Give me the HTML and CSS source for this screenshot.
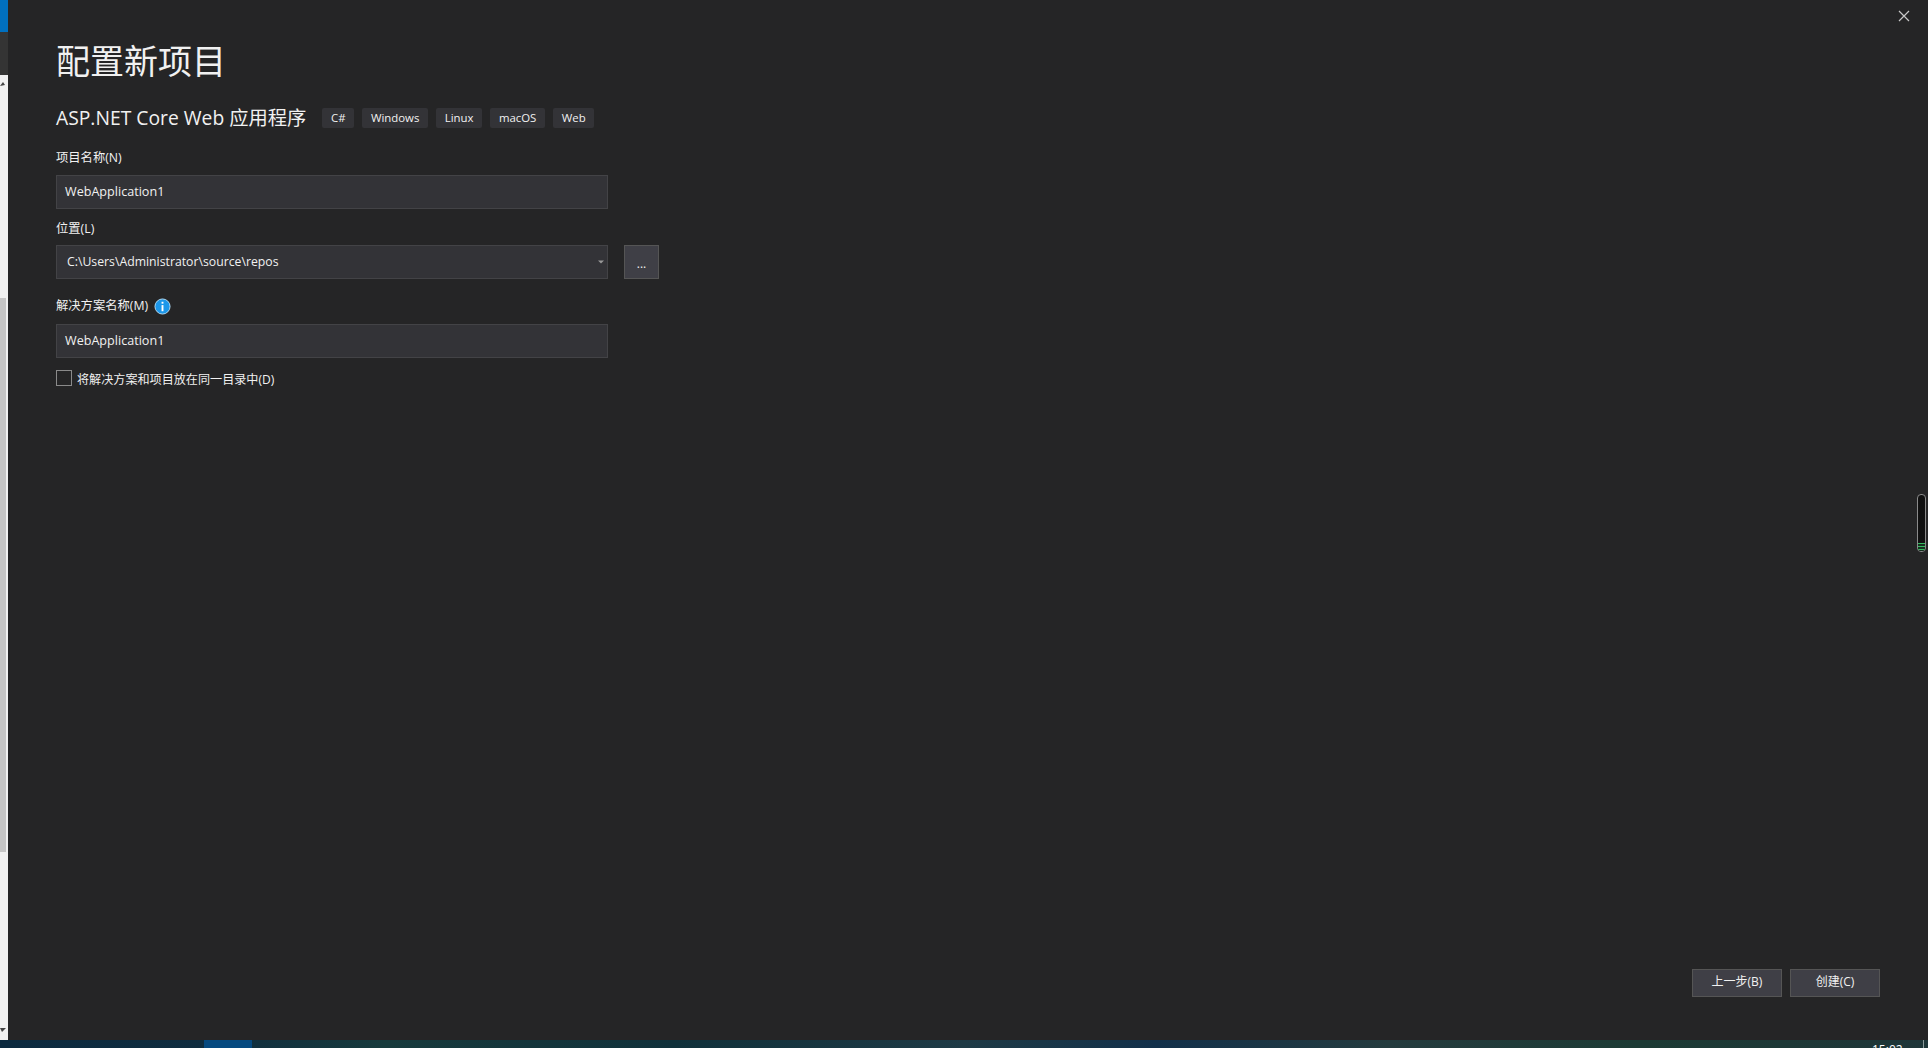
FILE: index.html
```html
<!DOCTYPE html>
<html lang="zh-CN">
<head>
<meta charset="utf-8">
<title>配置新项目</title>
<link rel="stylesheet" href="styles.css">
</head>
<body>
<div class="desktop">
  <aside class="strip">
    <div class="strip-blue"></div>
    <div class="strip-dark"></div>
    <div class="strip-track">
      <svg class="arrow" width="8" height="6" viewBox="0 0 8 6"><path d="M0 5 L3 1 L5 4 Z" fill="#444"/></svg>
      <div class="thumb"></div>
      <svg class="arrow-down" width="8" height="6" viewBox="0 0 8 6"><path d="M0 1 L6 1 L2 5 Z" fill="#444"/></svg>
    </div>
  </aside>
  <main class="dialog">
    <h1 class="title">配置新项目</h1>
    <div class="subtitle-row">
      <h2 class="subtitle">ASP.NET Core Web 应用程序</h2>
      <div class="tags">
        <span class="tag">C#</span>
        <span class="tag">Windows</span>
        <span class="tag">Linux</span>
        <span class="tag">macOS</span>
        <span class="tag">Web</span>
      </div>
    </div>
    <label class="label label-first">项目名称(N)</label>
    <div class="field">WebApplication1</div>
    <label class="label label-second">位置(L)</label>
    <div class="field-row">
      <div class="field field-combo">
        <span class="path">C:\Users\Administrator\source\repos</span>
        <svg class="caret" width="6" height="4" viewBox="0 0 6 4"><path d="M0 0.5 H6 L3 3.5 Z" fill="#999"/></svg>
      </div>
      <div class="browse">...</div>
    </div>
    <div class="label label-third">
      <span>解决方案名称(M)</span>
      <svg class="info" width="17" height="17" viewBox="0 0 18 18">
        <circle cx="9" cy="9" r="8" fill="#1c97ea" stroke="#b5def8" stroke-width="1"/>
        <rect x="8" y="7.5" width="2" height="6.5" fill="#fff"/>
        <rect x="8" y="4" width="2" height="2" fill="#fff"/>
      </svg>
    </div>
    <div class="field field-third">WebApplication1</div>
    <div class="check-row">
      <span class="checkbox"></span>
      <span class="check-text">将解决方案和项目放在同一目录中(D)</span>
    </div>
    <div class="footer">
      <div class="btn">上一步(B)</div>
      <div class="btn">创建(C)</div>
    </div>
    <svg class="close" width="12" height="12" viewBox="0 0 12 12"><path d="M1 1 L11 11 M11 1 L1 11" stroke="#c8c8c8" stroke-width="1.2" fill="none"/></svg>
    <div class="side-widget"><div class="side-green"></div></div>
  </main>
</div>
<footer class="taskbar">
  <div class="task-active"></div>
  <span class="clock">15:02</span>
  <span class="task-line"></span>
</footer>
</body>
</html>
```
FILE: styles.css
```css
* { box-sizing: border-box; }
html, body { margin: 0; height: 100%; }
body {
  display: flex;
  flex-direction: column;
  overflow: hidden;
  background: #252526;
  color: #f1f1f1;
  font-family: "Open Sans", "Noto Sans CJK SC", sans-serif;
  font-size: 13px;
}
.desktop { flex: 1; display: flex; min-height: 0; }
.strip { width: 8px; display: flex; flex-direction: column; flex: none; }
.strip-blue { height: 32px; background: #0070c0; }
.strip-dark { height: 43px; background: #343434; }
.strip-track {
  flex: 1;
  background: #f1f1f1;
  display: flex;
  flex-direction: column;
  padding-top: 6px;
}
.arrow { display: block; }
.thumb { height: 554px; width: 6px; margin-top: 211px; background: #c6c6c6; }
.arrow-down { display: block; margin-top: auto; margin-bottom: 7px; }
.dialog {
  flex: 1;
  position: relative;
  display: flex;
  flex-direction: column;
  padding: 0 48px 43px 48px;
  background: #252526;
}
.title {
  margin: 35px 0 0;
  height: 50px;
  line-height: 50px;
  font-size: 34px;
  font-weight: 400;
  font-family: "Noto Sans CJK SC", sans-serif;
}
.subtitle-row { display: flex; align-items: center; margin-top: 23px; height: 20px; }
.subtitle {
  margin: 0;
  font-size: 19.3px;
  font-weight: 400;
  line-height: 20px;
  white-space: nowrap;
}
.tags { display: flex; gap: 8px; margin-left: 16px; }
.tag {
  height: 20px;
  line-height: 20px;
  padding: 0 8.7px;
  background: #333337;
  border-radius: 2px;
  font-size: 11.4px;
}
.label { display: block; height: 18px; line-height: 18px; font-size: 12.3px; white-space: nowrap; }
.label-first { margin-top: 21px; }
.label-second { margin-top: 11px; }
.label-third { margin-top: 18px; display: flex; align-items: center; gap: 6px; }
.field {
  width: 552px;
  height: 34px;
  line-height: 31px;
  padding: 0 8px;
  background: #333337;
  border: 1px solid #434346;
  font-size: 12.6px;
  margin-top: 8px;
}
.field-third { margin-top: 9px; line-height: 32px; }
.label-second + .field-row { margin-top: 7px; }
.field-row { display: flex; gap: 16px; }
.field-combo {
  margin-top: 0;
  display: flex;
  align-items: center;
  justify-content: space-between;
  padding: 0 3px 0 10px;
}
.path { font-size: 12.25px; line-height: 18px; padding-bottom: 1px; }
.browse {
  width: 35px;
  height: 34px;
  line-height: 36px;
  text-align: center;
  background: #3f3f46;
  border: 1px solid #555;
  font-size: 12px;
}
.check-row { display: flex; align-items: center; gap: 5px; margin-top: 12px; height: 16px; }
.checkbox { width: 16px; height: 16px; border: 1px solid #8a8a8a; background: #252526; }
.check-text { font-size: 12.1px; line-height: 18px; white-space: nowrap; padding-top: 4px; }
.footer { margin-top: auto; display: flex; justify-content: flex-end; gap: 8px; }
.btn {
  width: 90px;
  height: 28px;
  line-height: 24px;
  text-align: center;
  background: #3f3f46;
  border: 1px solid #555;
  font-size: 12px;
}
.close { position: absolute; top: 10px; right: 18px; }
.side-widget {
  position: absolute;
  right: 2px;
  top: 494px;
  width: 9px;
  height: 58px;
  background: #101010;
  border: 1px solid #8a8a8a;
  border-radius: 4px;
  display: flex;
  align-items: flex-end;
}
.side-green {
  width: 100%;
  height: 8px;
  background: repeating-linear-gradient(180deg, #37b860 0 1px, #14301e 1px 3px);
  border-radius: 0 0 3px 3px;
}
.taskbar {
  flex: none;
  height: 8px;
  position: relative;
  overflow: hidden;
  display: flex;
  background: linear-gradient(90deg, #0c2a3f 0%, #0f2c3e 11%, #173a3c 20%, #10303a 35%, #1e3a45 50%, #12304a 60%, #243b3e 72%, #1c3a34 85%, #1e3538 100%);
}
.task-active { margin-left: 204px; width: 48px; background: #06497f; }
.clock {
  position: absolute;
  left: 1872px;
  top: 3px;
  color: #fff;
  font-size: 12px;
  line-height: 14px;
}
.task-line { position: absolute; left: 1923px; top: 0; width: 1px; height: 8px; background: #8a9a9a; }
```
